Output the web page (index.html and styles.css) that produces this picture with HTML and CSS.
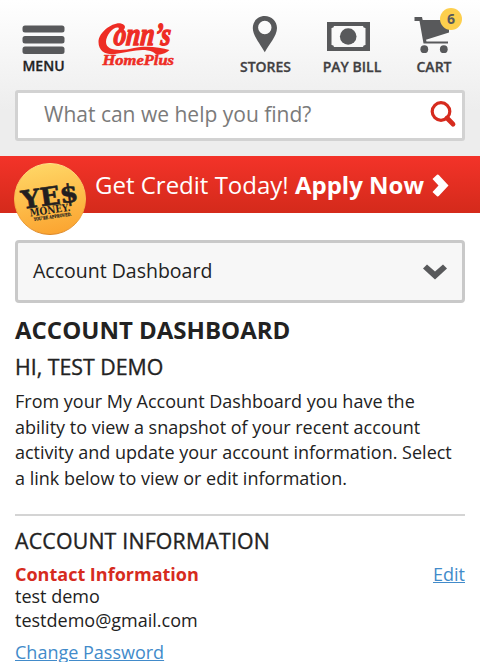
FILE: index.html
```html
<!DOCTYPE html>
<html lang="en">
<head>
<meta charset="utf-8">
<meta name="viewport" content="width=device-width">
<title>Account Dashboard</title>
<link rel="stylesheet" href="styles.css">
</head>
<body>
<header class="header">
  <nav class="toolbar">
    <a class="tool menu">
      <svg class="icon" width="43" height="56" viewBox="22 0 43 56"><g fill="#58595b"><rect x="22.500" y="25.500" width="42" height="7" rx="2.500"/><rect x="22.500" y="36" width="42" height="7.500" rx="2.500"/><rect x="22.500" y="46.500" width="42" height="7.500" rx="2.500"/></g></svg>
      <span class="label">MENU</span>
    </a>
    <a class="logo">
      <svg width="82" height="50" viewBox="96 20 82 50" fill="#ee2c24">
        <path d="M121 32C125 30 127.500 25 121 23.500C113 22 98.500 32 98.500 42C98.500 52 107 55 115 54C130 52 142 47.500 153 52L157 55Q166 54 169.500 50C160 47 145 45.500 134 48C122 51 106 51.500 106 42C106 35 113 27 118 27.500C120 28 118 31 115.500 33Z"/>
        <text class="logo-script" transform="translate(113 45) skewX(-5)" x="0" y="0" textLength="57" lengthAdjust="spacingAndGlyphs">onn’s</text>
        <text class="logo-sub" x="102.500" y="65" textLength="71.500" lengthAdjust="spacingAndGlyphs">HomePlus</text>
      </svg>
    </a>
    <a class="tool stores">
      <svg class="icon" width="26" height="56" viewBox="252 0 26 56"><path fill="#58595b" fill-rule="evenodd" d="M264.800 16C258 16 252.800 21 252.800 28C252.800 36 261 45 264.800 52.300C268.500 45 277 36 277 28C277 21 271.500 16 264.800 16ZM264.800 20.800A6.700 6.700 0 1 1 264.800 34.200A6.700 6.700 0 1 1 264.800 20.800Z"/></svg>
      <span class="label">STORES</span>
    </a>
    <a class="tool pay">
      <svg class="icon" width="43" height="56" viewBox="327 0 43 56"><path fill="#58595b" fill-rule="evenodd" d="M327 22H370V51H327ZM334 26Q334 28 331.500 28V45Q334 45 334 47H363Q363 45 365.500 45V28Q363 28 363 26Z"/><circle cx="348.200" cy="36.500" r="8.300" fill="#58595b"/></svg>
      <span class="label">PAY BILL</span>
    </a>
    <a class="tool cart">
      <svg class="icon" width="38" height="56" viewBox="414 0 38 56"><g fill="#58595b"><path d="M414.500 17H422L422.700 20H449V32.500L426 39.700L426.500 41.500H448V43.500H423.500L419.500 21H414.500Z"/><circle cx="424.300" cy="49.200" r="3.900"/><circle cx="443.800" cy="49.200" r="3.900"/></g></svg>
      <span class="label">CART</span>
      <span class="badge">6</span>
    </a>
  </nav>
  <div class="search">
    <span>What can we help you find?</span>
    <svg width="28" height="28" viewBox="0 0 28 28" fill="none" stroke="#d62b1e"><circle cx="12" cy="11.500" r="8.800" stroke-width="3.200"/><path d="M18 18L24 24.200" stroke-width="4.800" stroke-linecap="round"/></svg>
  </div>
</header>
<a class="promo">
  <svg class="seal" width="74" height="74" viewBox="0 0 74 74">
    <defs><linearGradient id="gold" x1=".4" y1="0" x2=".6" y2="1"><stop offset="0" stop-color="#ffd665"/><stop offset="1" stop-color="#fba430"/></linearGradient>
    <linearGradient id="rim" x1="0" y1="0" x2="0" y2="1"><stop offset="0" stop-color="#ffe28a"/><stop offset=".6" stop-color="#f8b040"/><stop offset="1" stop-color="#dc8727"/></linearGradient></defs>
    <circle cx="37" cy="37" r="35.500" fill="url(#gold)" stroke="url(#rim)"/>
    <g fill="#231f20" transform="rotate(-8 37 37)">
      <text class="seal-yes" x="8.500" y="43" textLength="57" lengthAdjust="spacingAndGlyphs">YE$</text>
      <text class="seal-money" x="15" y="51.500" textLength="41" lengthAdjust="spacingAndGlyphs">MONEY.</text>
      <text class="seal-small" x="18" y="56.500" textLength="38" lengthAdjust="spacingAndGlyphs">YOU’RE APPROVED.</text>
    </g>
  </svg>
  <span class="promo-text">Get Credit Today! <b>Apply Now</b></span>
  <svg class="promo-arrow" width="17" height="23" viewBox="0 0 17 23"><path fill="#fff" d="M.5 5L5 .8Q6 .2 7 1.200L16.500 11.500L7 21.800Q6 22.800 5 22.200L.5 18L6.500 11.500Z"/></svg>
</a>
<main class="content">
  <div class="select"><span>Account Dashboard</span>
    <svg width="24" height="16" viewBox="0 0 24 16"><path fill="#58595b" d="M0 4.500L4 .5L12 7.500L20 .5L24 4.500L12 15.500Z"/></svg>
  </div>
  <h1>ACCOUNT DASHBOARD</h1>
  <h2 class="greeting">HI, TEST DEMO</h2>
  <p class="intro">From your My Account Dashboard you have the ability to view a snapshot of your recent account activity and update your account information. Select a link below to view or edit information.</p>
  <section class="info">
    <h2 class="info-title">ACCOUNT INFORMATION</h2>
    <div class="info-head"><h3>Contact Information</h3><a class="link">Edit</a></div>
    <p class="line name">test demo</p>
    <p class="line email">testdemo@gmail.com</p>
    <a class="link">Change Password</a>
  </section>
</main>
</body>
</html>
```
FILE: styles.css
```css
* { box-sizing: border-box; }
html, body { margin: 0; height: 662px; overflow: hidden; }
body { background: #fff; color: #222; font: 18px/24px "Open Sans", "Noto Sans", sans-serif; }
h1, h2, h3, p { margin: 0; }
.header { height: 156px; padding: 0 15px; background: linear-gradient(#fff, #ededed 110px); }
.toolbar { height: 90px; display: grid; grid-template-columns: 57px 24px 82px 58px 59px 24px 66px 20px 58px; }
.tool { position: relative; display: flex; flex-direction: column; align-items: center; color: #414042; }
.icon { flex: none; display: block; }
.label { padding-top: 1px; font-size: 14px; line-height: 20px; font-weight: 600; white-space: nowrap; -webkit-text-stroke: .3px; }
.menu .label { padding-top: 0; color: #222; }
.logo { grid-column: 3; padding-top: 20px; }
.logo svg { display: block; overflow: visible; }
.stores { grid-column: 5; }
.stores .icon { margin-right: 2px; }
.pay { grid-column: 7; }
.pay .icon { margin-right: 7px; }
.cart { grid-column: 9; }
.cart .icon { margin-right: 2px; }
.badge { position: absolute; top: 8px; right: 1px; width: 22px; height: 22px; border-radius: 50%; background: #fdcf4d; color: #58595b; font-size: 14px; line-height: 22px; font-weight: 700; text-align: center; }
.logo-script { font: italic 700 32px "Liberation Serif", serif; stroke: #ee2c24; stroke-width: 1.4px; }
.logo-sub { font: italic 700 14px "Liberation Serif", serif; stroke: #ee2c24; stroke-width: .5px; }
.seal-yes { font: 700 25px "DejaVu Serif", serif; stroke: #231f20; stroke-width: .6px; }
.seal-money { font: 700 10.500px "DejaVu Serif", serif; }
.seal-small { font: 700 4.500px "DejaVu Serif", serif; stroke: #231f20; stroke-width: .2px; }
.search { height: 51px; border: 3px solid #d2d2d2; border-radius: 3px; background: #fff; display: flex; align-items: center; justify-content: space-between; padding: 0 5px 3px 26px; font-size: 21px; color: #7a7a7a; }
.promo { height: 57px; background: linear-gradient(#f33329, #d42a1b); color: #fff; display: flex; align-items: center; padding-left: 13px; font-size: 24px; }
.seal { flex: none; margin: 28px 8px 0 0; }
.promo-text { white-space: nowrap; }
.promo-arrow { position: relative; top: 1px; margin-left: 8px; }
.content { padding: 27px 15px 0; }
.select { height: 63px; border: 3px solid #c9c9c9; border-radius: 4px; background: #f7f7f7; display: flex; align-items: center; justify-content: space-between; padding: 0 15px; font-size: 19.500px; }
.select span { margin-top: -1px; }
h1 { margin-top: 11px; font-size: 24px; line-height: 32px; font-weight: 700; }
h2 { font-size: 21.300px; line-height: 30px; font-weight: 400; -webkit-text-stroke: .35px #222; }
.greeting { margin-top: 6px; }
.intro { margin-top: 7px; line-height: 25.700px; }
.info { margin-top: 22px; padding-top: 10px; border-top: 2px solid #d4d4d4; }
.info-title { letter-spacing: .2px; }
.info-head { display: flex; justify-content: space-between; margin-top: 6px; line-height: 24px; }
h3 { color: #d62b1e; font-size: 18px; line-height: 24px; font-weight: 700; }
.name { margin-top: -2px; }
.email { margin-bottom: 8px; }
.link { color: #428bca; text-decoration: underline; }
```
